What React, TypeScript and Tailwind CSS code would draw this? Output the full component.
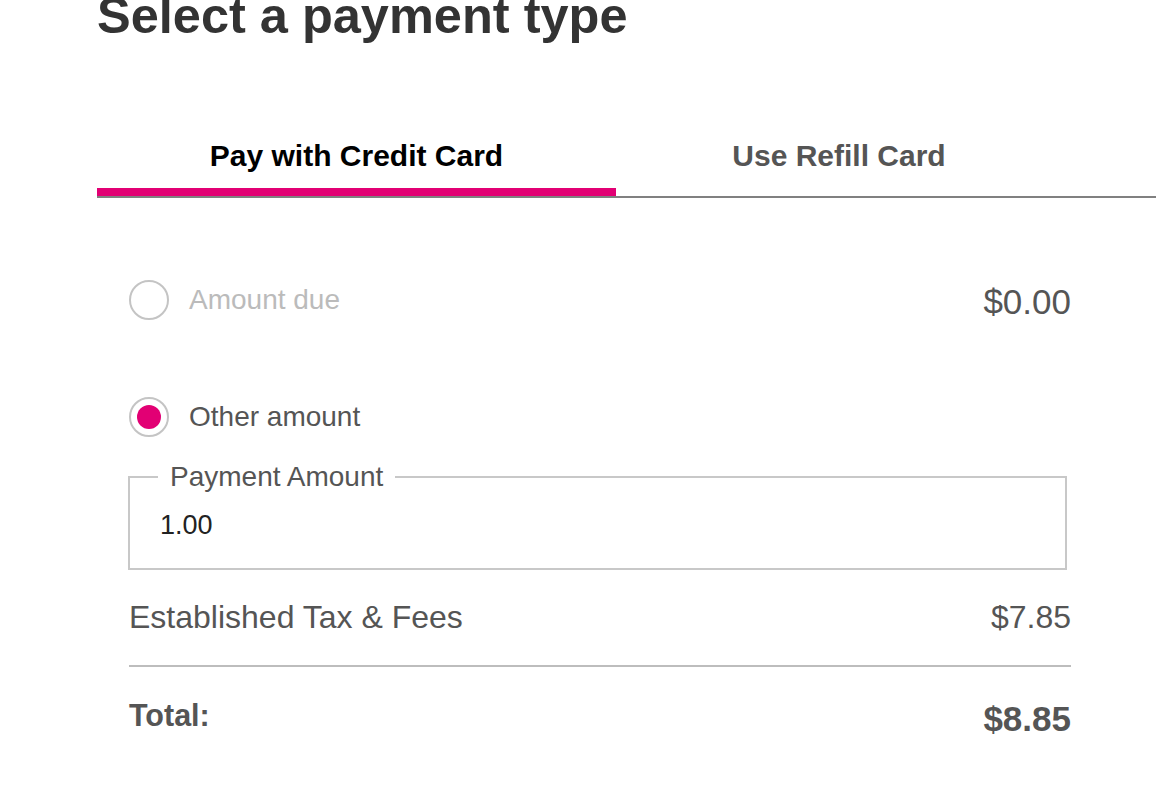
import { useState } from "react";

const font = { fontFamily: '"Liberation Sans", Arial, sans-serif' };

function Radio({ checked }: { checked: boolean }) {
    return (
        <span className="w-10 h-10 rounded-full border-2 border-[#c4c4c4] flex items-center justify-center shrink-0">
            {checked && <span className="w-6 h-6 rounded-full bg-[#e20074]" />}
        </span>
    );
}

export default function App() {
    const [tab, setTab] = useState(0);
    const [option, setOption] = useState<"due" | "other">("other");

    return (
        <div className="w-[1156px] h-[792px] overflow-hidden bg-white pl-[97px]" style={font}>
            <h1 className="mt-[-9px] text-[50.5px] leading-[50px] font-bold text-[#333333] whitespace-nowrap">
                Select a payment type
            </h1>

            {/* Tabs */}
            <div className="mt-[81px] flex border-b-2 border-[#808080]">
                <button
                    onClick={() => setTab(0)}
                    className="w-[519px] flex flex-col"
                >
                    <span className={`h-[66px] flex items-center justify-center text-[30px] font-bold ${tab === 0 ? "text-black" : "text-[#555555]"}`}>
                        Pay with Credit Card
                    </span>
                    <span className={`h-2 w-full ${tab === 0 ? "bg-[#e20074]" : ""}`} />
                </button>
                <button
                    onClick={() => setTab(1)}
                    className="w-[446px] flex flex-col"
                >
                    <span className={`h-[66px] flex items-center justify-center text-[30px] font-bold ${tab === 1 ? "text-black" : "text-[#555555]"}`}>
                        Use Refill Card
                    </span>
                    <span className={`h-2 w-full ${tab === 1 ? "bg-[#e20074]" : ""}`} />
                </button>
            </div>

            {/* Amount options */}
            <div className="w-[974px] pl-8 pt-[82px]">
                <div className="h-10 flex items-center justify-between" onClick={() => setOption("due")}>
                    <div className="flex items-center gap-5">
                        <Radio checked={option === "due"} />
                        <span className="text-[28px] leading-10 text-[#bbbbbb]">Amount due</span>
                    </div>
                    <span className="text-[35px] leading-10 text-[#555555] mt-1">$0.00</span>
                </div>

                <div className="mt-[77px] h-10 flex items-center gap-5" onClick={() => setOption("other")}>
                    <Radio checked={option === "other"} />
                    <span className="text-[28px] leading-10 text-[#555555]">Other amount</span>
                </div>

                <fieldset className="mt-6 ml-[-1px] w-[939px] border-2 border-[#c8c8c8] pb-[27px]">
                    <legend className="ml-[28px] px-3 text-[28px] leading-8 text-[#555555]">Payment Amount</legend>
                    <input
                        defaultValue="1.00"
                        className="mt-4 pl-[30px] w-full h-8 text-[27px] text-[#222222] bg-transparent outline-none"
                    />
                </fieldset>

                <div className="mt-[29px] flex items-center justify-between text-[32px] leading-9 text-[#555555]">
                    <span>Established Tax &amp; Fees</span>
                    <span>$7.85</span>
                </div>

                <div className="mt-[30px] h-0.5 bg-[#bdbdbd]" />

                <div className="mt-[30px] flex items-start justify-between font-bold text-[#555555]">
                    <span className="text-[30.5px] leading-9">Total:</span>
                    <span className="text-[35px] leading-10 mt-0.5">$8.85</span>
                </div>
            </div>
        </div>
    );
}
